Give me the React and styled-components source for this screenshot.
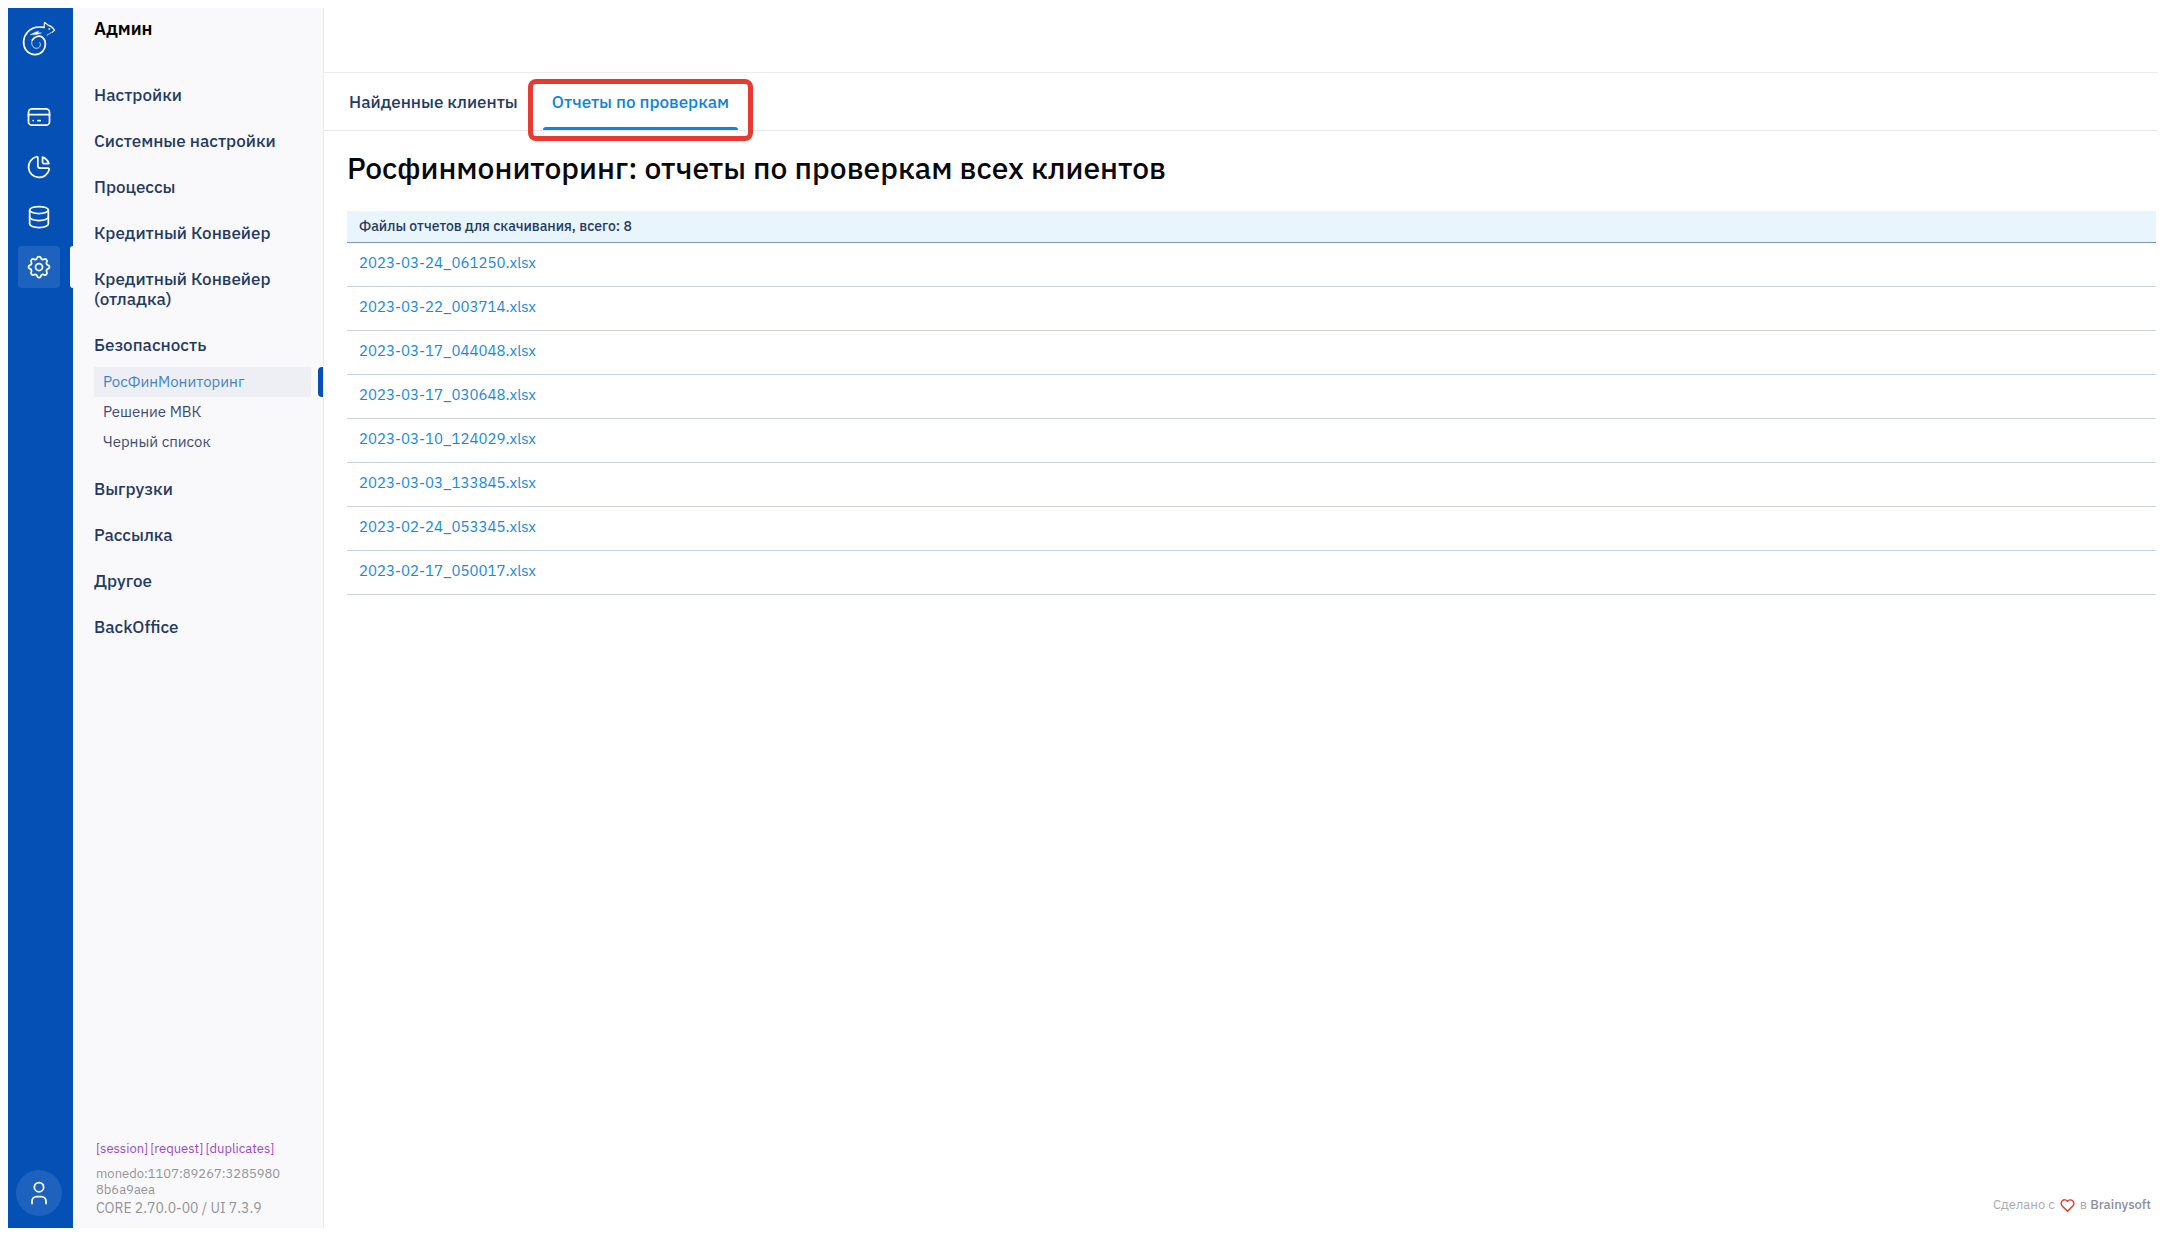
import React from 'react';
import styled, { createGlobalStyle } from 'styled-components';
import {
  TbChartPie,
  TbCreditCard,
  TbDatabase,
  TbHeart,
  TbSettings,
  TbUser,
} from 'react-icons/tb';

const GlobalStyle = createGlobalStyle`
  * {
    box-sizing: border-box;
  }

  body {
    margin: 0;
    padding: 8px 8px 10px;
    background: #fff;
    color: #253a63;
    font-family: 'IBM Plex Sans', Inter, 'Noto Sans', sans-serif;
    font-size: 16px;
  }

  a {
    color: inherit;
    text-decoration: none;
  }

  ul {
    list-style: none;
    margin: 0;
    padding: 0;
  }
`;

const Layout = styled.div`
  display: flex;
  min-height: calc(100vh - 18px);
`;

const Rail = styled.nav`
  display: flex;
  flex-direction: column;
  align-items: center;
  flex: none;
  width: 65px;
  padding: 12px 3px 12px 0;
  background: #0450b4;
  color: #fff;

  & svg {
    display: block;
  }
`;

const LogoLink = styled.a`
  margin-bottom: 40px;
`;

const RailList = styled.ul`
  display: flex;
  flex-direction: column;
  gap: 8px;
  flex: 1;
`;

const RailLink = styled.a`
  position: relative;
  display: flex;
  align-items: center;
  justify-content: center;
  width: 42px;
  height: 42px;
  border-radius: 4px;
  background: ${({ $active }) => ($active ? '#1d62bc' : 'transparent')};

  & svg {
    stroke-width: 1.5;
  }

  &::after {
    content: '';
    display: ${({ $active }) => ($active ? 'block' : 'none')};
    position: absolute;
    top: 0;
    right: -13px;
    width: 3px;
    height: 42px;
    border-radius: 4px 0 0 4px;
    background: #f9f9fc;
  }
`;

const Avatar = styled.button`
  display: flex;
  align-items: center;
  justify-content: center;
  width: 46px;
  height: 46px;
  padding: 0;
  border: 0;
  border-radius: 50%;
  background: #1d62bc;
  color: #fff;

  & svg {
    stroke-width: 1.5;
  }
`;

const Sidebar = styled.aside`
  display: flex;
  flex-direction: column;
  flex: none;
  width: 251px;
  padding: 11px 0 10px 21px;
  border-right: 1px solid #ebebf2;
  background: #f9f9fc;
`;

const SidebarTitle = styled.h2`
  margin: 0 0 46px;
  color: #000;
  font-size: 18px;
  font-weight: 600;
  line-height: 20px;
`;

const Menu = styled.ul`
  flex: 1;
  font-size: 17px;
  font-weight: 500;
  line-height: 20px;
`;

const MenuLink = styled.a`
  display: block;
  margin-bottom: 26px;
  padding-right: 40px;
`;

const SubMenu = styled.ul`
  margin: -14px 0 22px;
  font-size: 15px;
  font-weight: 400;
  line-height: 30px;
`;

const SubLink = styled.a`
  position: relative;
  display: block;
  margin-right: 12px;
  padding-left: 9px;
  background: ${({ $active }) => ($active ? '#eeeff5' : 'transparent')};
  color: ${({ $active }) => ($active ? '#3f84c8' : '#3f4d70')};

  &::after {
    content: '';
    display: ${({ $active }) => ($active ? 'block' : 'none')};
    position: absolute;
    top: 0;
    right: -12px;
    width: 5px;
    height: 30px;
    border-radius: 4px 0 0 4px;
    background: #0450b4;
  }
`;

const Debug = styled.div`
  padding-left: 2px;
  color: #949499;
  font-size: 13px;
  line-height: 16px;

  & p {
    margin: 0 0 2px;
  }
`;

const DebugLinks = styled.div`
  display: flex;
  gap: 2px;
  margin-bottom: 9px;
  color: #9d45c8;
`;

const Version = styled.p`
  font-size: 14px;
`;

const Main = styled.main`
  display: flex;
  flex-direction: column;
  flex: 1;
  min-width: 0;
`;

const TopBar = styled.header`
  height: 65px;
  border-bottom: 1px solid #ebebf2;
`;

const Tabs = styled.nav`
  display: flex;
  gap: 16px;
  padding: 0 16px;
  border-bottom: 1px solid #e6e6ee;
`;

const Tab = styled.a`
  position: relative;
  padding: 19px 9px 15px;
  border-bottom: 3px solid transparent;
  font-size: 17px;
  font-weight: 500;
  line-height: 20px;
  color: ${({ $active }) => ($active ? '#0b84df' : '#253a63')};

  &::after {
    content: '';
    display: ${({ $active }) => ($active ? 'block' : 'none')};
    position: absolute;
    right: 0;
    bottom: -3px;
    left: 0;
    height: 3px;
    border-radius: 3px 3px 0 0;
    background: #0b84df;
  }
`;

const Highlight = styled.span`
  position: absolute;
  inset: 6px -15px -14px;
  border: 5px solid #e53b30;
  border-radius: 8px;
  pointer-events: none;
`;

const Content = styled.section`
  flex: 1;
  padding: 17px 2px 0 23px;
`;

const Title = styled.h1`
  margin: 0 0 23px;
  color: #08080c;
  font-size: 30px;
  font-weight: 500;
  line-height: 40px;
`;

const Table = styled.table`
  width: 100%;
  border-collapse: collapse;
  text-align: left;

  & th {
    height: 31px;
    padding: 0 12px;
    border-bottom: 1px solid #7f95b0;
    background: #e9f5fc;
    font-size: 14px;
    font-weight: 500;
    line-height: 20px;
  }

  & td {
    height: 44px;
    padding: 0 12px 2px;
    border-bottom: 1px solid #cbd3dc;
    color: #1688df;
    font-size: 15px;
    line-height: 20px;
  }
`;

const Credits = styled.footer`
  display: flex;
  align-items: center;
  justify-content: flex-end;
  gap: 4px;
  padding: 0 7px 13px;
  color: #a6aab6;
  font-size: 13px;
  line-height: 20px;

  & svg {
    color: #e8382f;
  }

  & a {
    color: #8b8f9c;
    font-weight: 500;
  }
`;

const Logo = () => (
  <svg
    width="36"
    height="36"
    viewBox="-1 0 36 36"
    fill="none"
    stroke="currentColor"
    strokeLinecap="round"
    strokeLinejoin="round"
  >
    <path
      strokeWidth="1.7"
      d="M22 7.4C15 6.2 9.5 7.7 5.6 12C.8 17.5 .3 25.2 4.2 30.3C8.3 35.6 16.4 36 20.6 31.4C24.4 27.2 24.2 20.5 20.6 17.5C17.4 15 12.3 16.4 10.3 20"
    />
    <path
      strokeWidth="0.8"
      d="M10.3 20C8.5 24 10.8 28.3 14.3 28.3C17.8 28.3 19.4 25 17.8 22.6"
    />
    <path
      strokeWidth="1.1"
      d="M22 7.4L22.5 2.3L26 5.1C28.5 5.7 30.5 7 32.7 10.2L30.2 12.3"
    />
    <path strokeWidth="0.9" strokeDasharray="1.5 1.5" d="M29 12.8L24.6 15.4" />
    <path
      fill="currentColor"
      strokeWidth="0.4"
      d="M8.5 14.6C11.2 13.8 13 11.3 16.8 11.4L15.6 12.8L19.6 12.9L14.6 14.5Z"
    />
    <circle cx="27.3" cy="8.9" r="0.9" fill="currentColor" stroke="none" />
  </svg>
);

const sections = [
  { name: 'Карты', Icon: TbCreditCard },
  { name: 'Отчеты', Icon: TbChartPie },
  { name: 'Данные', Icon: TbDatabase },
  { name: 'Админ', Icon: TbSettings, active: true },
];

const menu = [
  { name: 'Настройки' },
  { name: 'Системные настройки' },
  { name: 'Процессы' },
  { name: 'Кредитный Конвейер' },
  { name: 'Кредитный Конвейер (отладка)' },
  {
    name: 'Безопасность',
    items: ['РосФинМониторинг', 'Решение МВК', 'Черный список'],
  },
  { name: 'Выгрузки' },
  { name: 'Рассылка' },
  { name: 'Другое' },
  { name: 'BackOffice' },
];

const files = [
  '2023-03-24_061250.xlsx',
  '2023-03-22_003714.xlsx',
  '2023-03-17_044048.xlsx',
  '2023-03-17_030648.xlsx',
  '2023-03-10_124029.xlsx',
  '2023-03-03_133845.xlsx',
  '2023-02-24_053345.xlsx',
  '2023-02-17_050017.xlsx',
];

const App = () => {
  return (
    <>
      <GlobalStyle />
      <Layout>
        <Rail>
          <LogoLink href="#" aria-label="Brainysoft">
            <Logo />
          </LogoLink>
          <RailList>
            {sections.map(({ name, Icon, active }) => (
              <li key={name}>
                <RailLink href="#" aria-label={name} $active={active}>
                  <Icon size={28} />
                </RailLink>
              </li>
            ))}
          </RailList>
          <Avatar type="button" aria-label="Профиль">
            <TbUser size={28} />
          </Avatar>
        </Rail>
        <Sidebar>
          <SidebarTitle>Админ</SidebarTitle>
          <Menu>
            {menu.map(({ name, items }) => (
              <li key={name}>
                <MenuLink href="#">{name}</MenuLink>
                {items && (
                  <SubMenu>
                    {items.map((item, i) => (
                      <li key={item}>
                        <SubLink href="#" $active={i === 0}>
                          {item}
                        </SubLink>
                      </li>
                    ))}
                  </SubMenu>
                )}
              </li>
            ))}
          </Menu>
          <Debug>
            <DebugLinks>
              <a href="#">[session]</a>
              <a href="#">[request]</a>
              <a href="#">[duplicates]</a>
            </DebugLinks>
            <p>
              monedo:1107:89267:3285980
              <br />
              8b6a9aea
            </p>
            <Version>CORE 2.70.0-00 / UI 7.3.9</Version>
          </Debug>
        </Sidebar>
        <Main>
          <TopBar />
          <Tabs>
            <Tab href="#">Найденные клиенты</Tab>
            <Tab href="#" $active>
              Отчеты по проверкам
              <Highlight />
            </Tab>
          </Tabs>
          <Content>
            <Title>Росфинмониторинг: отчеты по проверкам всех клиентов</Title>
            <Table>
              <thead>
                <tr>
                  <th>Файлы отчетов для скачивания, всего: {files.length}</th>
                </tr>
              </thead>
              <tbody>
                {files.map((file) => (
                  <tr key={file}>
                    <td>
                      <a href="#">{file}</a>
                    </td>
                  </tr>
                ))}
              </tbody>
            </Table>
          </Content>
          <Credits>
            <span>Сделано с</span>
            <TbHeart size={17} />
            <span>
              в <a href="#">Brainysoft</a>
            </span>
          </Credits>
        </Main>
      </Layout>
    </>
  );
};

export default App;
